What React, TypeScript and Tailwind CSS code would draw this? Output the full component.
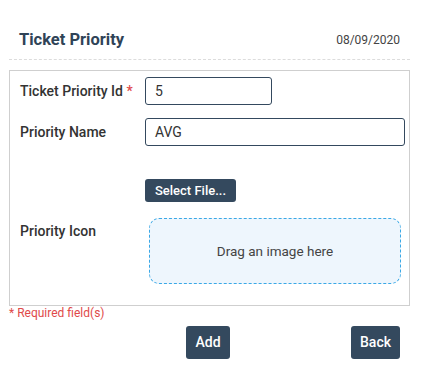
import React from "react";

export default function App() {
  const font = { fontFamily: 'Roboto, "Liberation Sans", Arial, sans-serif' };
  return (
    <div className="w-[423px] h-[375px] bg-white pt-[30px]" style={font}>
      <div className="ml-[9px] w-[401px] flex items-end justify-between pl-[10px] pr-[10px] pb-[9px] border-b border-dashed border-[#dcdcdc]">
        <div className="text-[16.5px] leading-[20px] font-bold text-[#2f4357]">Ticket Priority</div>
        <div className="text-[12px] leading-[16px] text-[#444] pb-[2px]">08/09/2020</div>
      </div>
      <div className="ml-[9px] w-[401px] mt-[10px] border border-[#cfcfcf] pt-[6px] pb-[21px] pl-[10px] pr-[4px]">
        <div className="flex items-center h-[28px]">
          <div className="w-[125px] text-[14px] font-medium text-[#333]">
            Ticket Priority Id <span className="text-[#e04a4a]">*</span>
          </div>
          <div className="w-[127px] h-[28px] border border-[#34495e] rounded-[3px] pl-[9px] flex items-center text-[14px] text-[#333]">5</div>
        </div>
        <div className="flex items-center h-[28px] mt-[13px]">
          <div className="w-[125px] text-[14px] font-medium text-[#333]">Priority Name</div>
          <div className="flex-1 h-[28px] border border-[#34495e] rounded-[3px] pl-[9px] flex items-center text-[14px] text-[#333]">AVG</div>
        </div>
        <div className="flex mt-[33px]">
          <div className="w-[125px]" />
          <div className="w-[91px] h-[23px] bg-[#34495e] rounded-[3px] text-white text-[13px] font-medium flex items-center justify-center">Select File...</div>
        </div>
        <div className="flex mt-[16px]">
          <div className="w-[125px] pt-[3px] text-[14px] font-medium text-[#333]">Priority Icon</div>
          <div className="ml-[4px] w-[252px] h-[66px] border border-dashed border-[#3aa8e6] rounded-[10px] bg-[#eef6fd] flex items-center justify-center text-[13.5px] text-[#444]">
            Drag an image here
          </div>
        </div>
      </div>
      <div className="ml-[9px] text-[12px] leading-[15px] text-[#e04a4a]">* Required field(s)</div>
      <div className="ml-[9px] w-[401px] mt-[5px] flex">
        <div className="ml-[177px] w-[44px] h-[33px] bg-[#34495e] rounded-[3px] text-white text-[14px] font-medium flex items-center justify-center">Add</div>
        <div className="ml-auto mr-[10px] w-[49px] h-[33px] bg-[#34495e] rounded-[3px] text-white text-[14px] font-medium flex items-center justify-center">Back</div>
      </div>
    </div>
  );
}
